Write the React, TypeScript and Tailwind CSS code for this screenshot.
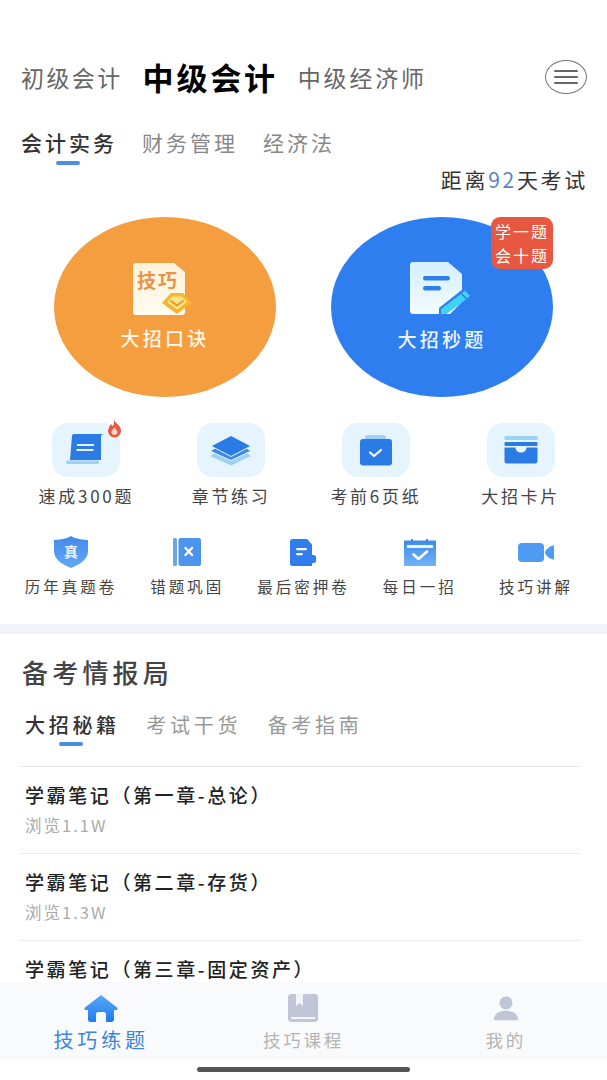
import React from 'react';

const Tile = ({ children }: { children: React.ReactNode }) => (
  <div className="w-[68px] h-[54px] rounded-[16px] bg-[#E6F4FE] mx-auto">{children}</div>
);

const ScrollIcon = () => (
  <svg width="68" height="54" viewBox="0 0 68 54" className="overflow-visible">
    <path d="M22 11h30c-2 0-3 1-3 3v23H18l2-24c0-1 1-2 2-2z" fill="#2B7BE4" />
    <rect x="14" y="37.500" width="33" height="3.500" rx="1.700" fill="#9CD3F5" />
    <rect x="25" y="21" width="17" height="2" fill="#E6F4FE" />
    <rect x="24.500" y="26" width="17" height="2" fill="#E6F4FE" />
    <path d="M62 -3c1 3 7 5 7 11a6.500 6.500 0 0 1-13 0c0-3 2-5 3-7 1 1 1 2 2 2 1-2 1-4 1-6z" fill="#E8573F" />
    <path d="M62.500 4c0 2 3 3 3 5a3 3 0 0 1-6 0c0-2 2-3 3-5z" fill="#FBD3C6" />
  </svg>
);

const LayersIcon = () => (
  <svg width="68" height="54" viewBox="0 0 68 54">
    <path d="M13 33l7-4 14 7 14-7 6 4-20 9.500z" fill="#9CD3F5" />
    <path d="M13 28l7-4 14 7 14-7 6 4-20 9.500z" fill="#3F88E8" stroke="#E6F4FE" strokeWidth="1" />
    <path d="M34 12.500l20 10.500-20 10.500-20-10.500z" fill="#2B7BE4" stroke="#E6F4FE" strokeWidth="1" />
  </svg>
);

const ClipIcon = () => (
  <svg width="68" height="54" viewBox="0 0 68 54">
    <path d="M23 17v-2c0-2 1-3 3-3h15c2 0 3 1 3 3v2z" fill="#9CD3F5" />
    <rect x="18" y="16" width="32" height="26.500" rx="3" fill="#2B7BE4" />
    <path d="M28 29.500l4 3.500 7-6" fill="none" stroke="#fff" strokeWidth="2.200" strokeLinecap="round" strokeLinejoin="round" />
  </svg>
);

const CardIcon = () => (
  <svg width="68" height="54" viewBox="0 0 68 54">
    <rect x="17.500" y="13" width="33" height="4" fill="#9CD3F5" />
    <rect x="17.500" y="19" width="33" height="4" rx="1" fill="#2B7BE4" />
    <path d="M17.500 24.500h11c0 3 2.500 5 5.500 5s5.500-2 5.500-5h11V38c0 1.500-1 2.500-2.500 2.500H20c-1.500 0-2.500-1-2.500-2.500z" fill="#2B7BE4" />
  </svg>
);

const ShieldIcon = () => (
  <svg width="34" height="32" viewBox="0 0 34 32">
    <defs>
      <linearGradient id="shieldG" x1="0" y1="0" x2="0" y2="1">
        <stop offset="0" stopColor="#4489EA" />
        <stop offset="1" stopColor="#62A9F6" />
      </linearGradient>
    </defs>
    <path d="M17 0c3 2 8 3.500 17 4v11c0 8-7 13-17 17C7 28 0 23 0 15V4c9-.5 14-2 17-4z" fill="url(#shieldG)" />
    <text x="17" y="21" textAnchor="middle" fontSize="14" fontWeight="700" fill="#E8F2FE">真</text>
  </svg>
);

const WrongBookIcon = () => (
  <svg width="28" height="28" viewBox="0 0 28 28">
    <rect x="0" y="0" width="4" height="28" rx="1.500" fill="#6AA5EA" />
    <rect x="5.500" y="0" width="22.500" height="28" rx="2.500" fill="#4C94EE" />
    <path d="M12.500 10l6.500 7M19 10l-6.500 7" stroke="#fff" strokeWidth="2.400" strokeLinecap="round" />
  </svg>
);

const SecretDocIcon = () => (
  <svg width="26" height="27" viewBox="0 0 26 27">
    <path d="M2.500 0H17l5 5.500V16h2c1 0 2 1 2 2v4c0 1-1 2-2 2h-2v3H2.500C1 27 0 26 0 24.500v-22C0 1 1 0 2.500 0z" fill="#2F7DEE" />
    <rect x="6" y="9" width="11" height="2.200" rx="1.100" fill="#fff" />
    <rect x="6" y="14" width="7" height="2.200" rx="1.100" fill="#fff" />
  </svg>
);

const CalendarIcon = () => (
  <svg width="32" height="27" viewBox="0 0 32 27">
    <defs>
      <linearGradient id="calG" x1="0" y1="0" x2="0" y2="1">
        <stop offset="0" stopColor="#3E8AE8" />
        <stop offset="1" stopColor="#72B3F6" />
      </linearGradient>
    </defs>
    <rect x="0" y="1.500" width="32" height="25.500" fill="url(#calG)" />
    <rect x="3" y="6" width="26" height="3" fill="#EAF4FE" />
    <rect x="7" y="0" width="2" height="5" fill="#3E8AE8" />
    <rect x="22" y="0" width="2" height="5" fill="#3E8AE8" />
    <path d="M9.500 15.500l5 4.500 8.500-7.500" fill="none" stroke="#fff" strokeWidth="2.600" strokeLinecap="round" strokeLinejoin="round" />
  </svg>
);

const VideoIcon = () => (
  <svg width="36" height="19" viewBox="0 0 36 19">
    <rect x="0" y="0" width="26" height="19" rx="4" fill="#4F9AF2" />
    <path d="M35 2.500c.5 0 1 .5 1 1v12c0 .5-.5 1-1 1-2 0-8-4-8-7s6-7 8-7z" fill="#4F9AF2" />
  </svg>
);

const topGrid = [
  { label: '速成300题', icon: <ScrollIcon /> },
  { label: '章节练习', icon: <LayersIcon /> },
  { label: '考前6页纸', icon: <ClipIcon /> },
  { label: '大招卡片', icon: <CardIcon /> },
];

const smallGrid = [
  { label: '历年真题卷', icon: <ShieldIcon /> },
  { label: '错题巩固', icon: <WrongBookIcon /> },
  { label: '最后密押卷', icon: <SecretDocIcon /> },
  { label: '每日一招', icon: <CalendarIcon /> },
  { label: '技巧讲解', icon: <VideoIcon /> },
];

const notes = [
  { title: '学霸笔记（第一章-总论）', views: '浏览1.1W' },
  { title: '学霸笔记（第二章-存货）', views: '浏览1.3W' },
  { title: '学霸笔记（第三章-固定资产）' },
];

export default function App() {
  return (
    <div className="h-[1080px] w-[607px] bg-white flex flex-col overflow-hidden font-['Noto_Sans_CJK_SC','Noto_Sans',sans-serif]">
      <div className="flex-1 overflow-hidden">
        {/* Exam switcher */}
        <header className="mt-[60px] h-[34px] flex items-center pl-[21px] pr-[20px]">
          <span className="text-[23px] leading-[30px] tracking-[2.400px] text-[#666] whitespace-nowrap">初级会计</span>
          <span className="ml-[20px] text-[31px] leading-[32px] tracking-[2.800px] font-bold text-black whitespace-nowrap">中级会计</span>
          <span className="ml-[20px] text-[23px] leading-[30px] tracking-[2.800px] text-[#666] whitespace-nowrap">中级经济师</span>
          <button className="ml-auto w-[42px] h-[34px] rounded-[50%] border-[1.500px] border-[#777] flex flex-col items-center justify-center gap-[4px]">
            <i className="block w-[24px] h-[2px] bg-[#666] rounded-full" />
            <i className="block w-[24px] h-[2px] bg-[#666] rounded-full" />
            <i className="block w-[24px] h-[2px] bg-[#666] rounded-full" />
          </button>
        </header>

        {/* Subject tabs */}
        <nav className="mt-[34px] pl-[21px] flex gap-[25px] text-[21px] tracking-[3px] leading-[28px]">
          <div>
            <div className="text-[#333] font-medium">会计实务</div>
            <div className="mt-[5px] w-[24px] h-[4px] rounded-full bg-[#4A90E2] ml-[35px]" />
          </div>
          <div className="text-[#888]">财务管理</div>
          <div className="text-[#888]">经济法</div>
        </nav>

        <p className="mt-[4px] pr-[19px] h-[20px] leading-[20px] text-right text-[21px] tracking-[2.700px] text-[#333]">
          距离<span className="text-[#5B85C4]">92</span>天考试
        </p>

        {/* Big entries */}
        <section className="mt-[28px] px-[54px] flex justify-between">
          <div className="w-[222px] h-[180px] rounded-[50%] bg-[#F49E3F] flex flex-col items-center pt-[46px]">
            <svg width="60" height="52" viewBox="0 0 60 52" className="mr-[4px]">
              <defs>
                <linearGradient id="tipG" x1="0" y1="0" x2="0" y2="1">
                  <stop offset="0" stopColor="#FFF3D8" />
                  <stop offset="1" stopColor="#FFFBF0" />
                </linearGradient>
              </defs>
              <path d="M3 0h38l11 9v40c0 2-1 3-3 3H3c-2 0-3-1-3-3V3c0-2 1-3 3-3z" fill="url(#tipG)" />
              <text x="25" y="25" textAnchor="middle" fontSize="19" fontWeight="700" fill="#E8924A" letterSpacing="2" fontFamily="'Noto Sans CJK SC',serif">技巧</text>
              <path d="M29 40l8-9c.5-.5 1-1 2-1h10c1 0 1.500.5 2 1l8 9-15 11z" fill="#F5B52E" />
              <path d="M34 39l5-5.500h10l5 5.500-10 7.500z" fill="#FCE48E" />
              <path d="M38 38l6 4.500 6-4.500" fill="none" stroke="#E79A22" strokeWidth="2" strokeLinecap="round" />
            </svg>
            <span className="mt-[10px] text-[19px] leading-[26px] tracking-[3.300px] font-medium text-[#FFF6E8]">大招口诀</span>
          </div>

          <div className="relative w-[222px] h-[180px] rounded-[50%] bg-[#2E7EF0] flex flex-col items-center pt-[45px]">
            <svg width="60" height="52" viewBox="0 0 60 52" className="mr-[4px]">
              <defs>
                <linearGradient id="sheetG" x1="0" y1="0" x2="0" y2="1">
                  <stop offset="0" stopColor="#D4F0FE" />
                  <stop offset="1" stopColor="#F3FBFF" />
                </linearGradient>
              </defs>
              <path d="M3 0h35l14 12v28L40 52H3c-2 0-3-1-3-3V3c0-2 1-3 3-3z" fill="url(#sheetG)" />
              <rect x="13" y="14" width="27" height="4.500" rx="2.200" fill="#2E7EF0" />
              <rect x="13" y="24" width="18" height="4.500" rx="2.200" fill="#2E7EF0" />
              <path d="M29 46l24-19 7 7-24 18h-7z" fill="#2E7EF0" />
              <path d="M31 47l20-15 5 5.500-20 14.500h-5z" fill="#3FD3F7" />
              <path d="M52 31l3-2.500 5 5.500-3 2.500z" fill="#3FD3F7" />
            </svg>
            <span className="mt-[12px] text-[19px] leading-[26px] tracking-[3.300px] font-medium text-[#EEF6FF]">大招秒题</span>
            <div className="absolute right-0 top-0 w-[62px] h-[52px] rounded-[9px] bg-[#E8573F] text-white text-[16px] tracking-[2px] leading-[24px] flex flex-col items-center justify-center whitespace-nowrap">
              <span>学一题</span>
              <span>会十题</span>
            </div>
          </div>
        </section>

        {/* Main shortcuts */}
        <section className="mt-[26px] px-[14px] grid grid-cols-4">
          {topGrid.map((item) => (
            <div key={item.label} className="text-center">
              <Tile>{item.icon}</Tile>
              <div className="mt-[9px] h-[20px] leading-[20px] text-[17px] tracking-[2.700px] text-[#444] whitespace-nowrap">{item.label}</div>
            </div>
          ))}
        </section>

        <section className="mt-[29px] px-[13px] grid grid-cols-5">
          {smallGrid.map((item) => (
            <div key={item.label} className="flex flex-col items-center">
              <div className="h-[34px] flex items-center justify-center">{item.icon}</div>
              <div className="mt-[7px] h-[20px] leading-[20px] text-[15.500px] tracking-[3px] text-[#444] whitespace-nowrap">{item.label}</div>
            </div>
          ))}
        </section>

        <div className="mt-[28px] h-[10px] bg-[#F0F3F7]" />

        {/* News */}
        <h2 className="mt-[23px] pl-[22px] h-[30px] leading-[30px] text-[26px] tracking-[4.200px] font-medium text-[#444]">备考情报局</h2>

        <nav className="mt-[25px] pl-[25px] flex gap-[26.500px] text-[20px] tracking-[3.700px] leading-[26px]">
          <div>
            <div className="text-[#333] font-medium">大招秘籍</div>
            <div className="mt-[4px] w-[24px] h-[4px] rounded-full bg-[#4A90E2] ml-[34px]" />
          </div>
          <div className="text-[#999]">考试干货</div>
          <div className="text-[#999]">备考指南</div>
        </nav>

        <div className="mt-[20px] ml-[20px] mr-[27px] border-t border-[#E8E8E8]">
          {notes.map((note) => (
            <div key={note.title} className="h-[87px] border-b border-[#EBEBEB] pl-[5px] pt-[16px]">
              <div className="h-[24px] leading-[24px] text-[19px] tracking-[2.600px] font-medium text-[#222] whitespace-nowrap">{note.title}</div>
              {note.views && (
                <div className="mt-[8px] h-[20px] leading-[20px] text-[16.500px] tracking-[2px] text-[#AAA]">{note.views}</div>
              )}
            </div>
          ))}
        </div>
      </div>

      {/* Tab bar */}
      <footer className="h-[78px] bg-[#F9FAFB] grid grid-cols-3 pt-[12px]">
        <div className="flex flex-col items-center">
          <svg width="34" height="28" viewBox="0 0 34 28">
            <defs>
              <linearGradient id="homeG" x1="0" y1="0" x2="0" y2="1">
                <stop offset="0" stopColor="#5AA8F5" />
                <stop offset="1" stopColor="#1E7CF0" />
              </linearGradient>
            </defs>
            <path d="M17 1l16 12.500c1 1 .5 2.500-1 2.500h-2v9.500c0 1.500-1 2.500-2.500 2.500H22v-8c0-1-1-2-2-2h-6c-1 0-2 1-2 2v8H6.500C5 28 4 27 4 25.500V16H2c-1.500 0-2-1.500-1-2.500z" fill="url(#homeG)" />
          </svg>
          <span className="mt-[6px] text-[20px] leading-[24px] tracking-[3.800px] text-[#3A86DA]">技巧练题</span>
        </div>
        <div className="flex flex-col items-center">
          <svg width="30" height="28" viewBox="0 0 30 28">
            <path d="M3 0h24c1.500 0 3 1.500 3 3v22c0 1.500-1.500 3-3 3H3c-1.500 0-3-1.500-3-3V3c0-1.500 1.500-3 3-3z" fill="#C0C5D8" />
            <path d="M8 0h7v12l-3.500-3L8 12z" fill="#F4F5F9" />
            <rect x="3" y="23" width="24" height="2" fill="#F4F5F9" />
          </svg>
          <span className="mt-[6px] text-[17.500px] leading-[24px] tracking-[2.800px] text-[#B4B4B4]">技巧课程</span>
        </div>
        <div className="flex flex-col items-center">
          <svg width="26" height="28" viewBox="0 0 26 28" className="pt-[2px]">
            <circle cx="13" cy="7.500" r="7" fill="#C0C5D8" />
            <path d="M0 26c0-7 5-10 13-10s13 3 13 10z" fill="#C0C5D8" />
          </svg>
          <span className="mt-[6px] text-[17.500px] leading-[24px] tracking-[2.800px] text-[#B4B4B4]">我的</span>
        </div>
      </footer>

      {/* Home indicator */}
      <div className="h-[20px] bg-white pt-[7px]">
        <div className="mx-auto w-[213px] h-[5px] rounded-full bg-[#555]" />
      </div>
    </div>
  );
}
